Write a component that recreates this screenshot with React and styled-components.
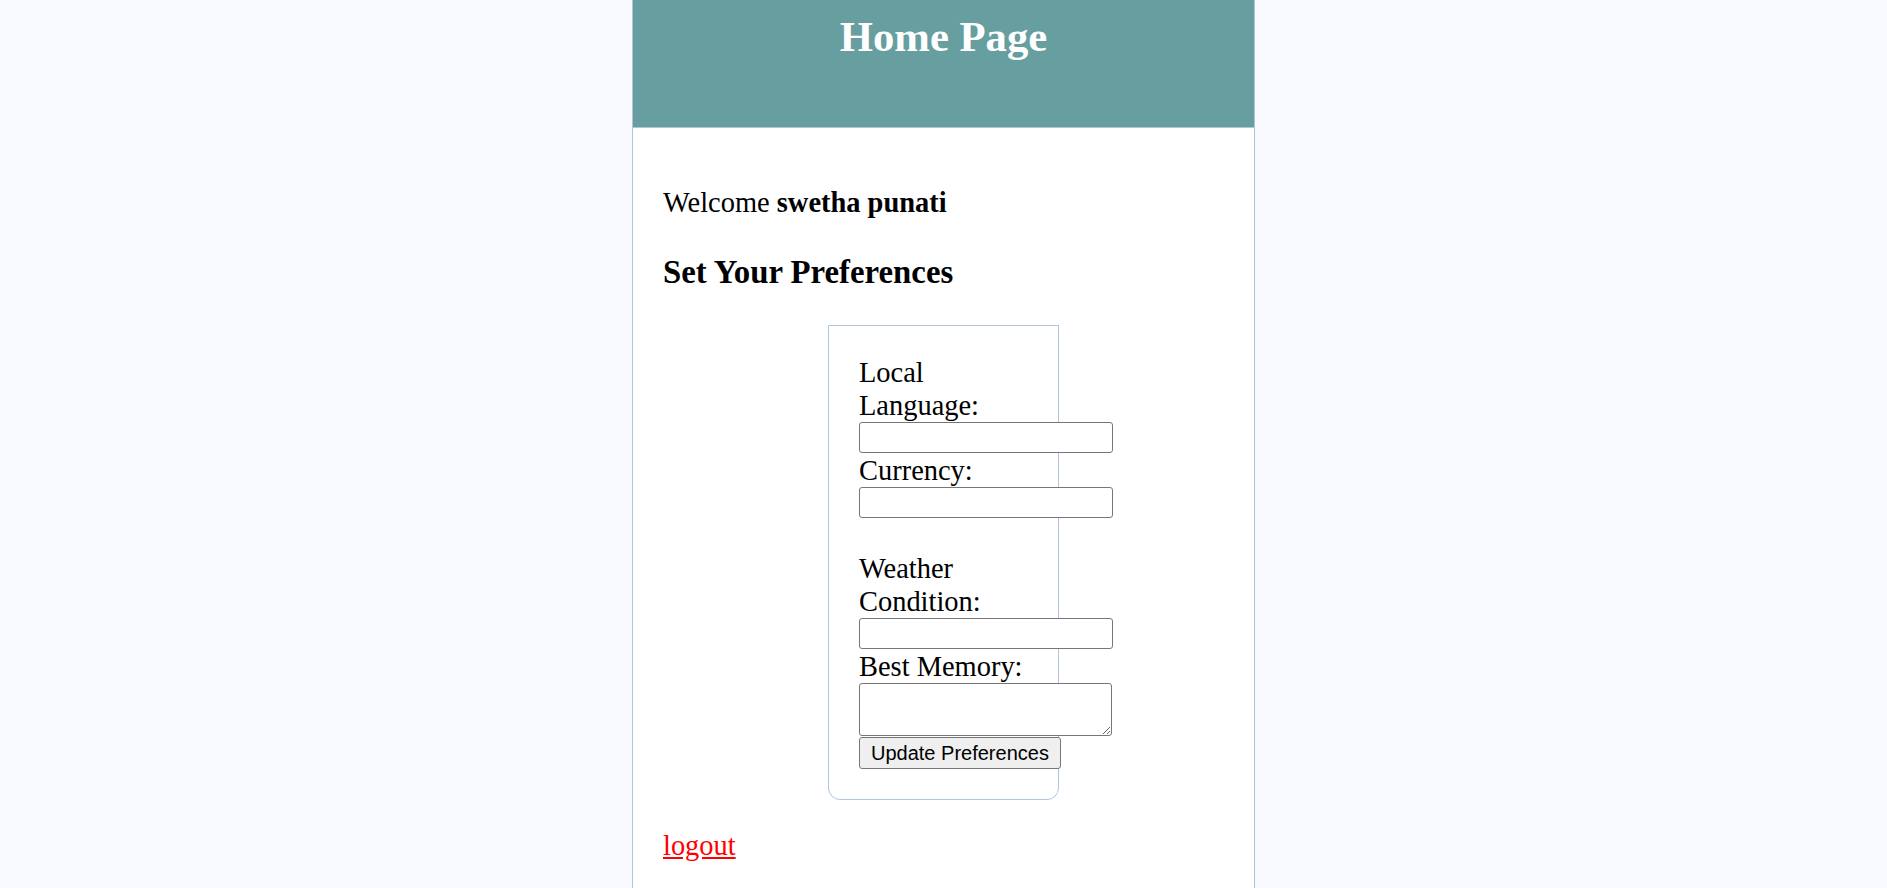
import React from "react";
import styled, { createGlobalStyle } from "styled-components";

const GlobalStyle = createGlobalStyle`
  html, body {
    margin: 0;
    padding: 0;
  }
  body {
    background: #f8f8ff;
    font-family: "Liberation Serif", "Times New Roman", serif;
    color: #000;
  }
`;

const Page = styled.div`
  box-sizing: border-box;
  width: 623px;
  min-height: 100vh;
  margin: 0 auto;
  background: #ffffff;
  border-left: 1px solid #b0c4de;
  border-right: 1px solid #b0c4de;
`;

const Header = styled.header`
  box-sizing: border-box;
  height: 128px;
  padding-top: 12px;
  background: #679ea0;
  border-bottom: 1px solid #b0c4de;
  text-align: center;
`;

const Title = styled.h1`
  margin: 0;
  font-size: 42.7px;
  line-height: 49px;
  font-weight: bold;
  color: #ffffff;
`;

const Main = styled.main`
  padding: 58px 30px 26px;
`;

const Welcome = styled.p`
  margin: 0;
  font-size: 28.44px;
  line-height: 33px;
`;

const Heading = styled.h2`
  margin: 35px 0 0;
  font-size: 32.8px;
  line-height: 37px;
  font-weight: bold;
`;

const PrefForm = styled.form`
  box-sizing: border-box;
  width: 231px;
  margin: 34px auto 0;
  padding: 30px;
  border: 1px solid #b0c4de;
  border-radius: 0 0 12px 12px;
`;

const FieldLabel = styled.label`
  display: block;
  font-size: 28.44px;
  line-height: 33px;
`;

const TextInput = styled.input`
  display: block;
  box-sizing: border-box;
  width: 254px;
  height: 31px;
  margin: 0 0 1px;
  padding: 1px 2px;
  border: 1px solid #767676;
  border-radius: 3px;
  background: #fff;
  font-family: "Liberation Sans", Arial, sans-serif;
  font-size: 20px;
`;

const Spacer = styled.div`
  height: 33px;
`;

const MemoryArea = styled.textarea`
  display: block;
  box-sizing: border-box;
  width: 253px;
  height: 53px;
  margin: 0 0 1px;
  padding: 2px;
  border: 1px solid #767676;
  border-radius: 3px;
  background: #fff;
  font-family: "Liberation Mono", monospace;
  font-size: 17px;
`;

const SubmitButton = styled.button`
  display: block;
  box-sizing: border-box;
  height: 32px;
  padding: 0 11px;
  border: 1px solid #767676;
  border-radius: 3px;
  background: #efefef;
  color: #000;
  font-family: "Liberation Sans", Arial, sans-serif;
  font-size: 20px;
  line-height: 30px;
  white-space: nowrap;
`;

const LogoutLine = styled.p`
  margin: 29px 0 0;
  font-size: 28.44px;
  line-height: 33px;
`;

const LogoutLink = styled.a`
  color: #ff0000;
  text-decoration: underline;
`;

export default function App() {
  return (
    <>
      <GlobalStyle />
      <Page>
        <Header>
          <Title>Home Page</Title>
        </Header>
        <Main>
          <Welcome>
            Welcome <b>swetha punati</b>
          </Welcome>
          <Heading>Set Your Preferences</Heading>
          <PrefForm onSubmit={(e) => e.preventDefault()}>
            <FieldLabel htmlFor="lang">Local Language:</FieldLabel>
            <TextInput id="lang" type="text" />
            <FieldLabel htmlFor="cur">Currency:</FieldLabel>
            <TextInput id="cur" type="text" />
            <Spacer />
            <FieldLabel htmlFor="weather">Weather Condition:</FieldLabel>
            <TextInput id="weather" type="text" />
            <FieldLabel htmlFor="memory">Best Memory:</FieldLabel>
            <MemoryArea id="memory" />
            <SubmitButton type="submit">Update Preferences</SubmitButton>
          </PrefForm>
          <LogoutLine>
            <LogoutLink href="#">logout</LogoutLink>
          </LogoutLine>
        </Main>
      </Page>
    </>
  );
}
